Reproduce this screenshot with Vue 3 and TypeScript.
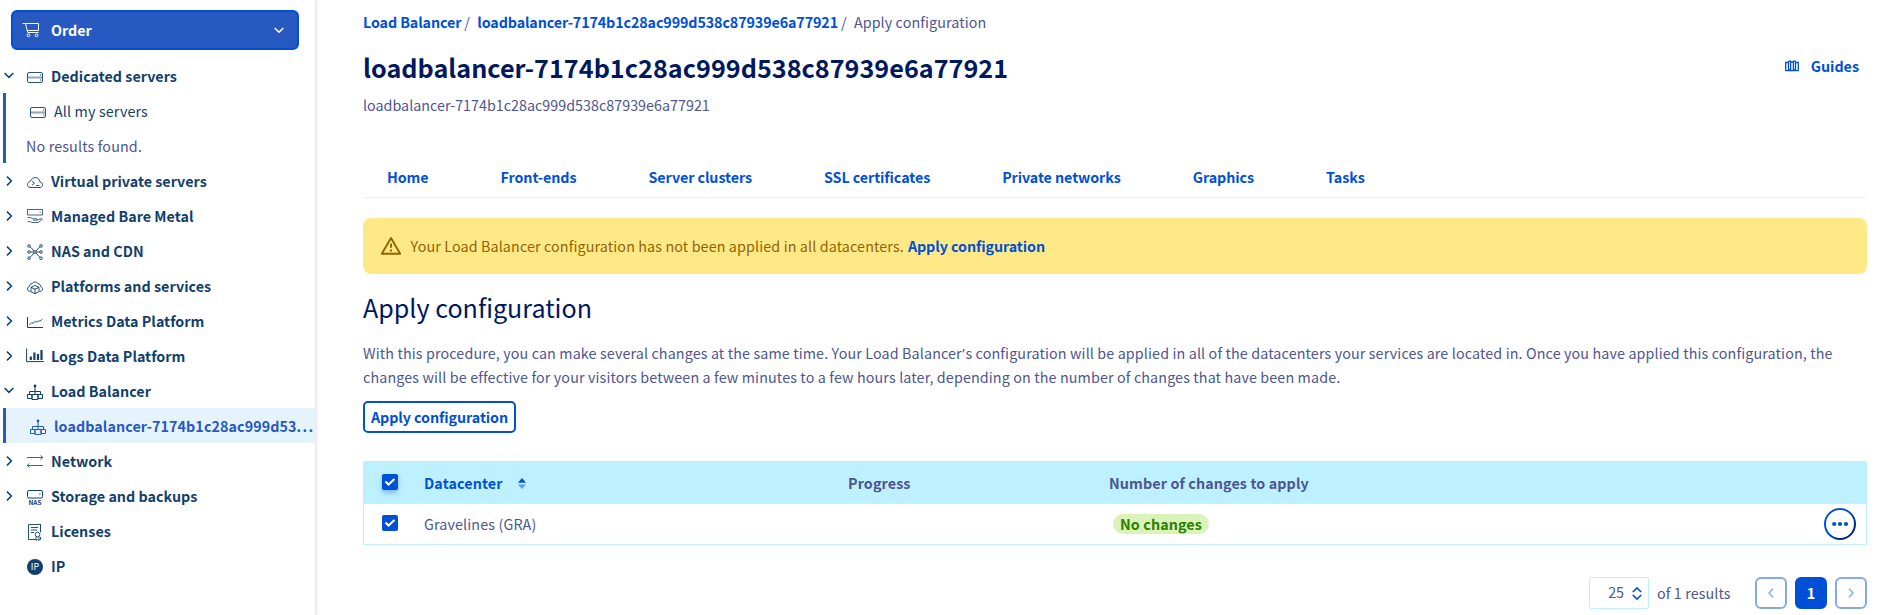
<script setup lang="ts">
type Icon = 'server' | 'vps' | 'metal' | 'cdn' | 'platform' | 'metrics' | 'logs' | 'balancer' | 'network' | 'nas' | 'license' | 'ip'

interface MenuItem {
  label: string
  icon?: Icon
  state?: 'open' | 'closed'
  level: 0 | 1
  note?: boolean
  active?: boolean
}

const serviceId = 'loadbalancer-7174b1c28ac999d538c87939e6a77921'

const menu: MenuItem[] = [
  { label: 'Dedicated servers', icon: 'server', state: 'open', level: 0 },
  { label: 'All my servers', icon: 'server', level: 1 },
  { label: 'No results found.', level: 1, note: true },
  { label: 'Virtual private servers', icon: 'vps', state: 'closed', level: 0 },
  { label: 'Managed Bare Metal', icon: 'metal', state: 'closed', level: 0 },
  { label: 'NAS and CDN', icon: 'cdn', state: 'closed', level: 0 },
  { label: 'Platforms and services', icon: 'platform', state: 'closed', level: 0 },
  { label: 'Metrics Data Platform', icon: 'metrics', state: 'closed', level: 0 },
  { label: 'Logs Data Platform', icon: 'logs', state: 'closed', level: 0 },
  { label: 'Load Balancer', icon: 'balancer', state: 'open', level: 0 },
  { label: serviceId.slice(0, 30), icon: 'balancer', level: 1, active: true },
  { label: 'Network', icon: 'network', state: 'closed', level: 0 },
  { label: 'Storage and backups', icon: 'nas', state: 'closed', level: 0 },
  { label: 'Licenses', icon: 'license', level: 0 },
  { label: 'IP', icon: 'ip', level: 0 },
]

const tabs = ['Home', 'Front-ends', 'Server clusters', 'SSL certificates', 'Private networks', 'Graphics', 'Tasks']
</script>

<template>
  <div class="page">
    <aside class="sidebar">
      <button class="order">
        <svg class="cart" width="18" height="16" viewBox="0 0 18 16" fill="none" stroke="currentColor">
          <path d="M.5 1.5h3l2.2 9h10.8M3.7 1.5h12.8v7H5.200" />
          <circle cx="6.5" cy="13.3" r="1.4" />
          <circle cx="14.5" cy="13.3" r="1.4" />
        </svg>
        <span class="order-label">Order</span>
        <svg width="10" height="7" viewBox="0 0 10 7" fill="none" stroke="currentColor" stroke-width="1.5">
          <path d="M.7 1 5 5.3 9.3 1" />
        </svg>
      </button>

      <ul class="menu">
        <li
          v-for="item in menu"
          :key="item.label"
          class="item"
          :class="{ sub: item.level === 1, note: item.note, active: item.active }"
        >
          <span v-if="item.level === 0" class="caret">
            <svg v-if="item.state === 'open'" class="down" width="10" height="7" viewBox="0 0 10 7" fill="none" stroke="currentColor" stroke-width="1.5">
              <path d="M.6 1 5 5.4 9.4 1" />
            </svg>
            <svg v-if="item.state === 'closed'" class="right" width="7" height="10" viewBox="0 0 7 10" fill="none" stroke="currentColor" stroke-width="1.5">
              <path d="M1 .6 5.4 5 1 9.4" />
            </svg>
          </span>
          <svg v-if="item.icon" class="icon" width="18" height="18" viewBox="0 0 18 18" fill="none" stroke="currentColor">
            <g v-if="item.icon === 'server'" stroke-width=".9">
              <rect x="1.500" y="4.500" width="15" height="10" rx="1.500" />
              <path d="M1.500 9h15M1.500 10h15" stroke-width=".5" />
              <path d="M14 7h1.200M14 12h1.200" stroke-width="1" />
            </g>
            <g v-else-if="item.icon === 'vps'" stroke-width=".9">
              <path d="M4 14.5h10.500c1.200-.3 2-1.300 2-2.700 0-1.500-1-2.500-2.400-2.700C13.500 6.500 12 4.600 9.500 4.500 7 4.400 5 6 4.500 8.400 2.800 8.600 1.500 9.800 1.500 11.600c0 1.600 1 2.700 2.500 2.900z" />
              <path d="m6 8.300 2.400 1.900L6 12.200M10.300 12.500h3" />
            </g>
            <g v-else-if="item.icon === 'metal'" stroke-width=".8">
              <path d="M1.500 1.500h15v5.500h-15zM13.500 4.200h1.300" />
              <path d="M1.500 9.500h3l2 1.200h4c.8 0 .8 1.400 0 1.400H7M10.500 12.200l4.500-1.500c1.300-.3 1.700.6.8 1.200L12 14.500H6l-1.500-.8h-3" />
            </g>
            <g v-else-if="item.icon === 'cdn'" stroke-width=".9">
              <circle cx="9" cy="9" r="1.300" />
              <circle cx="3" cy="2.900" r="1.300" /><circle cx="15" cy="2.900" r="1.300" />
              <circle cx="3" cy="9" r="1.300" /><circle cx="15" cy="9" r="1.300" />
              <circle cx="3" cy="15.200" r="1.300" /><circle cx="15" cy="15.200" r="1.300" />
              <path d="M4 3.900c2 1 2.500 3 4 4.200M14 3.900c-2 1-2.500 3-4 4.200M4 14.200c2-1 2.500-3 4-4.200M14 14.200c-2-1-2.500-3-4-4.200M4.300 9h3.400M10.300 9h3.400" />
            </g>
            <g v-else-if="item.icon === 'platform'" stroke-width=".9">
              <path d="M4.500 13.500c-1.800 0-3-1-3-2.600 0-1.300.8-2.200 2-2.500C3.500 6.500 4.500 5.800 6 5.800 6.600 4.500 7.600 4 9 4s2.400.5 3 1.800c1.500 0 2.500.7 2.500 2.600 1.200.3 2 1.200 2 2.500 0 1.600-1.200 2.600-3 2.600" />
              <path d="M9 7.500 13 9.300v4.400l-4 2-4-2V9.300zM5 9.300l4 1.900 4-1.900M9 11.200v4.500" />
            </g>
            <g v-else-if="item.icon === 'metrics'">
              <path d="M1.500 4v10.500h15.500" />
              <path d="m3.500 12 2.300-2.500 1.400 1L9.500 8l1.500 1.300 2-1.600 1 .6L16.500 6" stroke-width=".9" />
            </g>
            <g v-else-if="item.icon === 'logs'">
              <path d="M.6 .5v13.100h17.300" />
              <path d="M4.800 12V8.500M8.400 12V4.500M12 12V6M15.500 12V2" stroke-width="2.200" />
            </g>
            <g v-else-if="item.icon === 'balancer'">
              <circle cx="9" cy="3" r="1.400" fill="currentColor" stroke="none" />
              <path d="M9 3v8.500M3.500 11v-2.500h11v2.500" />
              <path d="M1.500 11.500h4.500v4H1.500zM12 11.500h4.500v4H12zM6 11.500h6v5h-6z" />
            </g>
            <g v-else-if="item.icon === 'network'" stroke-width=".8">
              <path d="M1 4.500h16M14.500 2.500l2.300 2-2.300 2M1 12.500h16M3.500 10.500l-2.300 2 2.300 2" />
            </g>
            <g v-else-if="item.icon === 'nas'">
              <rect x="1.500" y="2.500" width="15" height="7.500" rx="1.500" />
              <path d="M13.200 6h1.300" />
              <text x="9" y="16.500" text-anchor="middle" class="nas-text">NAS</text>
            </g>
            <g v-else-if="item.icon === 'license'" stroke-width=".9">
              <path d="M9.500 16.500h-7v-15h12v6M14.500 1.500v8M5 4.500h7M5 7h6M5 9.500h3M14.500 14v2.500h-1" />
              <circle cx="11.500" cy="11.500" r="2.300" />
              <path d="M10 13.500v4l1.500-1.200 1.500 1.200v-4" />
            </g>
            <g v-else-if="item.icon === 'ip'">
              <circle cx="9" cy="9" r="8" fill="currentColor" stroke="none" />
              <text x="9" y="12.300" text-anchor="middle" class="ip-text">IP</text>
            </g>
          </svg>
          <span class="label">{{ item.label }}<span v-if="item.active" class="dots">...</span></span>
        </li>
      </ul>
    </aside>

    <main class="main">
      <nav class="crumbs">
        <a>Load Balancer</a><i>/</i><a class="crumb-id">{{ serviceId }}</a><i>/</i><span>Apply configuration</span>
      </nav>

      <header class="head">
        <h1>{{ serviceId }}</h1>
        <a class="guides">
          <svg width="14" height="12" viewBox="0 0 14 12" fill="none" stroke="currentColor" stroke-width="1.300">
            <path d="M3.500 1.500 5 1l2 1 2-1 1.500.5v8L7 10.500l-3.500-1zM3.500 2.500H.7v8.200h12.600V2.500h-2.800M5.600 1v8.500M8.400 1v8.500" />
          </svg>
          Guides
        </a>
      </header>
      <p class="description">{{ serviceId }}</p>

      <nav class="tabs">
        <a v-for="tab in tabs" :key="tab">{{ tab }}</a>
      </nav>

      <div class="alert">
        <svg width="22" height="20" viewBox="0 0 22 20" fill="none" stroke="currentColor" stroke-width="1.900" stroke-linejoin="round">
          <path d="M11 2 20.200 17.800H1.800z" />
          <path d="M11 7.500v4.300M11 13.500v2" />
        </svg>
        <span class="alert-text">Your Load Balancer configuration has not been applied in all datacenters.</span>
        <a>Apply configuration</a>
      </div>

      <h2>Apply configuration</h2>
      <p class="intro">
        With this procedure, you can make several changes at the same time. Your Load Balancer<span class="apostrophe">’</span>s configuration will be applied in all of the datacenters your services are located in. Once you have applied this configuration, the changes will be effective for your visitors between a few minutes to a few hours later, depending on the number of changes that have been made.
      </p>
      <button class="apply">Apply configuration</button>

      <section class="grid">
        <div class="row heading">
          <span class="check raised">
            <svg width="12" height="10" viewBox="0 0 12 10" fill="none" stroke="#fff" stroke-width="2"><path d="m1.500 4.500 3 3 6-5.500" /></svg>
          </span>
          <span class="sortable">
            Datacenter
            <svg width="8" height="11" viewBox="0 0 8 11">
              <path d="M4 0 8 4.700H0z" fill="#0050d7" />
              <path d="M4 11 0 6.500h8z" fill="#5c9bea" />
            </svg>
          </span>
          <span>Progress</span>
          <span>Number of changes to apply</span>
        </div>
        <div class="row">
          <span class="check">
            <svg width="12" height="10" viewBox="0 0 12 10" fill="none" stroke="#fff" stroke-width="2"><path d="m1.500 4.500 3 3 6-5.500" /></svg>
          </span>
          <span class="cell">Gravelines (GRA)</span>
          <span></span>
          <span><b class="badge">No changes</b></span>
          <svg class="more" width="32" height="32" viewBox="0 0 32 32">
            <defs>
              <linearGradient id="ring" x1="0" y1="0" x2="1" y2="1">
                <stop offset=".4" stop-color="#0050d7" />
                <stop offset=".8" stop-color="#00267a" />
              </linearGradient>
            </defs>
            <circle cx="16" cy="16" r="15" fill="none" stroke="url(#ring)" stroke-width="2" />
            <g fill="#0050d7"><circle cx="10.200" cy="16" r="2.100" /><circle cx="16" cy="16" r="2.100" /><circle cx="22" cy="16" r="2.100" /></g>
          </svg>
        </div>
      </section>

      <footer class="pager">
        <span class="select">
          25
          <svg width="10" height="13" viewBox="0 0 10 13" fill="none" stroke="#0050d7" stroke-width="1.700"><path d="M.8 5 5 1l4.200 4M.8 8 5 12l4.200-4" /></svg>
        </span>
        <span class="total">of 1 results</span>
        <button class="step">
          <svg width="6" height="10" viewBox="0 0 6 10" fill="none" stroke="currentColor" stroke-width="1.400"><path d="M5 .7 1 5l4 4.300" /></svg>
        </button>
        <button class="step current">1</button>
        <button class="step">
          <svg width="6" height="10" viewBox="0 0 6 10" fill="none" stroke="currentColor" stroke-width="1.400"><path d="M1 .7 5 5 1 9.300" /></svg>
        </button>
      </footer>
    </main>
  </div>
</template>

<style>
body {
  margin: 0;
  background: #fff;
  overflow: hidden;
}
</style>

<style scoped>
.page {
  display: flex;
  width: 100%;
  height: 615px;
  font: 400 14.3px/24px "Noto Sans CJK SC", "Source Sans Pro", sans-serif;
  color: #4d5592;
}
.page * {
  box-sizing: border-box;
}
button {
  font: inherit;
  font-weight: 700;
}
a {
  color: #0050d7;
  font-weight: 700;
}
h1,
h2,
p,
ul {
  margin: 0;
  padding: 0;
}

/* Sidebar */
.sidebar {
  flex: 0 0 315px;
  min-width: 0;
  padding-top: 10px;
  box-shadow: 1px 0 4px rgba(80, 70, 190, 0.22);
}
.order {
  display: flex;
  align-items: center;
  width: 288px;
  height: 40px;
  margin: 0 0 8px 11px;
  padding: 0 13px 0 9px;
  color: #fff;
  background: #2859c0;
  border: 2px solid #0050d7;
  border-radius: 6px;
}
.cart {
  margin-right: 11px;
}
.order-label {
  flex: 1;
  text-align: left;
}
.menu {
  list-style: none;
}
.item {
  display: flex;
  align-items: center;
  height: 35px;
  color: #113f6d;
  font-weight: 700;
  letter-spacing: 0.02px;
}
.caret {
  display: flex;
  width: 26px;
}
.caret .down {
  margin-left: 4px;
}
.caret .right {
  margin-left: 6px;
}
.icon {
  flex: none;
  margin: 3px 7px 0 0;
}
.sub {
  margin-left: 3px;
  padding-left: 23px;
  border-left: 3px solid #2859c0;
  font-weight: 400;
  letter-spacing: 0.14px;
}
.label {
  white-space: nowrap;
}
.note {
  padding-left: 20px;
  color: #4d5592;
  letter-spacing: 0.15px;
}
.active {
  color: #2859c0;
  background: #e5f4fc;
  font-weight: 700;
  letter-spacing: 0.08px;
}
.dots {
  letter-spacing: 1.3px;
}
.nas-text {
  font-size: 6.5px;
  font-weight: 700;
  letter-spacing: 0;
  fill: currentColor;
  stroke: none;
}
.ip-text {
  font-size: 9px;
  font-weight: 400;
  letter-spacing: 0;
  fill: #fff;
  stroke: none;
}

/* Main column */
.main {
  flex: 1;
  min-width: 0;
  padding: 10px 12px 0 48px;
}
.crumbs {
  display: flex;
  letter-spacing: -0.1px;
}
.crumbs i {
  font-style: normal;
  margin: 0 7.4px 0 3px;
}
.crumb-id {
  letter-spacing: -0.11px;
}
.crumbs span {
  letter-spacing: 0.1px;
}
.head {
  display: flex;
  justify-content: space-between;
  align-items: center;
  height: 32px;
  margin-top: 17px;
}
h1 {
  font-size: 25.2px;
  line-height: 32px;
  letter-spacing: 0.02px;
  color: #00185e;
}
.guides {
  display: flex;
  align-items: center;
  gap: 12px;
  margin: -3px 8px 0 0;
}
.description {
  margin-top: 10px;
  letter-spacing: 0.02px;
}
.tabs {
  display: flex;
  gap: 24px;
  height: 41px;
  margin-top: 40px;
  padding-top: 8px;
  border-bottom: 1px solid #e5f3fc;
}
.tabs a {
  padding: 0 24px;
  letter-spacing: -0.08px;
}
.alert {
  display: flex;
  align-items: center;
  height: 56px;
  margin-top: 20px;
  padding-left: 17px;
  color: #916404;
  background: #ffe986;
  border-radius: 8px;
}
.alert-text {
  margin: 0 4px 0 8.6px;
  letter-spacing: 0.125px;
}
.alert a,
.apply {
  letter-spacing: -0.07px;
}
h2 {
  margin-top: 17px;
  font-size: 25.1px;
  font-weight: 400;
  line-height: 32px;
  color: #00185e;
}
.intro {
  margin-top: 18px;
  letter-spacing: 0.13px;
}
.apostrophe {
  margin: 0 0.5px;
  font-family: "Noto Sans", sans-serif;
  line-height: 1;
}
.apply {
  display: block;
  width: 153px;
  height: 32px;
  margin-top: 12px;
  padding: 0;
  line-height: 28px;
  color: #0050d7;
  background: #fff;
  border: 2px solid #0050d7;
  border-radius: 5px;
}

/* Data grid */
.grid {
  margin-top: 28px;
  border: 1px solid #bef1ff;
}
.row {
  display: grid;
  grid-template-columns: 42px 424px 261px 1fr 42px;
  align-items: center;
  height: 40px;
  padding-left: 18px;
}
.heading {
  height: 42px;
  background: #bef1ff;
  font-weight: 700;
  letter-spacing: 0.12px;
}
.check {
  display: flex;
  align-items: center;
  justify-content: center;
  width: 16px;
  height: 16px;
  margin-top: -2px;
  background: #0050d7;
  border-radius: 2px;
}
.raised {
  box-shadow: 0 3px 5px rgba(0, 80, 215, 0.35);
}
.sortable {
  display: flex;
  align-items: center;
  gap: 15.5px;
  color: #0050d7;
}
.cell {
  letter-spacing: 0.14px;
}
.badge {
  display: block;
  width: 96px;
  height: 20px;
  margin: 0 0 0 4px;
  line-height: 20px;
  text-align: center;
  letter-spacing: 0.1px;
  color: #2b8000;
  background: #dbf2b9;
  border-radius: 10px;
}
.more {
  margin-top: -1px;
}

/* Pagination */
.pager {
  display: flex;
  align-items: center;
  justify-content: flex-end;
  gap: 8px;
  margin-top: 32px;
}
.select {
  display: flex;
  justify-content: flex-end;
  align-items: center;
  gap: 8px;
  width: 60px;
  height: 32px;
  padding: 0 6px 2px 0;
  border: 1px solid #bef1ff;
  border-radius: 2px;
}
.select svg {
  margin-top: 2px;
}
.total {
  width: 90px;
  letter-spacing: 0.1px;
}
.step {
  display: flex;
  align-items: center;
  justify-content: center;
  width: 32px;
  height: 32px;
  padding: 0;
  color: #85a9ea;
  background: #fff;
  border: 2px solid #85a9ea;
  border-radius: 6px;
}
.current {
  color: #fff;
  background: #0050d7;
  border-color: #0050d7;
}
</style>
